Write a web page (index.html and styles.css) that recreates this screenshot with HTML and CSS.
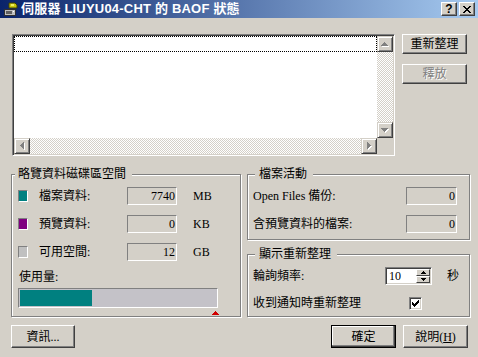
FILE: index.html
```html
<!DOCTYPE html>
<html>
<head>
<meta charset="utf-8">
<link rel="stylesheet" href="styles.css">
</head>
<body>
<div class="window">
  <div class="titlebar">
    <svg class="app-icon" width="16" height="16" viewBox="0 0 16 16">
      <path d="M7 2h6l2 2v3H7z" fill="#c8c810" stroke="#404000" stroke-width="1"/>
      <rect x="9" y="3" width="3" height="2" fill="#f0f060"/>
      <rect x="2.5" y="8.5" width="11" height="6" fill="#c0c0c0" stroke="#303030"/>
      <rect x="4" y="10" width="6" height="3" fill="#606060"/>
      <rect x="11" y="10" width="1" height="1" fill="#ffffff"/>
    </svg>
    <span class="title">伺服器 LIUYU04-CHT 的 BAOF 狀態</span>
    <div class="caption-buttons">
      <span class="cap-btn">?</span>
      <span class="cap-btn">
        <svg width="8" height="7" viewBox="0 0 8 7"><path d="M0 0h2v1H0zM6 0h2v1H6zM1 1h2v1H1zM5 1h2v1H5zM2 2h4v1H2zM3 3h2v1H3zM2 4h4v1H2zM1 5h2v1H1zM5 5h2v1H5zM0 6h2v1H0zM6 6h2v1H6z" fill="#000"/></svg>
      </span>
    </div>
  </div>

  <div class="client">
    <div class="top-row">
      <div class="listbox">
        <div class="list-body">
          <div class="list-items"><div class="list-item"></div></div>
          <div class="vscroll">
            <div class="sbtn"><svg width="8" height="5" viewBox="0 0 8 5"><path transform="translate(1 1)" d="M3 0h1v1h1v1h1v1h1v1H0V3h1V2h1V1h1z" fill="#fff"/><path d="M3 0h1v1h1v1h1v1h1v1H0V3h1V2h1V1h1z" fill="#808080"/></svg></div>
            <div class="track"></div>
            <div class="sbtn"><svg width="8" height="5" viewBox="0 0 8 5"><path transform="translate(1 1)" d="M0 0h7v1H6v1H5v1H4v1H3V3H2V2H1V1H0z" fill="#fff"/><path d="M0 0h7v1H6v1H5v1H4v1H3V3H2V2H1V1H0z" fill="#808080"/></svg></div>
          </div>
        </div>
        <div class="hscroll-row">
          <div class="hscroll">
            <div class="sbtn"><svg width="5" height="8" viewBox="0 0 5 8"><path transform="translate(1 1)" d="M3 0h1v7H3V6H2V5H1V4H0V3h1V2h1V1h1z" fill="#fff"/><path d="M3 0h1v7H3V6H2V5H1V4H0V3h1V2h1V1h1z" fill="#808080"/></svg></div>
            <div class="track"></div>
            <div class="sbtn"><svg width="5" height="8" viewBox="0 0 5 8"><path transform="translate(1 1)" d="M0 0h1v1h1v1h1v1h1v1H3v1H2v1H1v1H0z" fill="#fff"/><path d="M0 0h1v1h1v1h1v1h1v1H3v1H2v1H1v1H0z" fill="#808080"/></svg></div>
          </div>
          <div class="corner"></div>
        </div>
      </div>
      <div class="side-buttons">
        <button class="btn side-btn">重新整理</button>
        <button class="btn side-btn" disabled>釋放</button>
      </div>
    </div>

    <div class="groups">
      <fieldset class="group space">
        <legend>略覽資料磁碟區空間</legend>
        <div class="space-body">
          <div class="stat-row">
            <span class="swatch teal"></span>
            <span class="stat-label">檔案資料:</span>
            <span class="field">7740</span>
            <span class="unit">MB</span>
          </div>
          <div class="stat-row">
            <span class="swatch purple"></span>
            <span class="stat-label">預覽資料:</span>
            <span class="field">0</span>
            <span class="unit">KB</span>
          </div>
          <div class="stat-row">
            <span class="swatch gray"></span>
            <span class="stat-label">可用空間:</span>
            <span class="field">12</span>
            <span class="unit">GB</span>
          </div>
          <div class="usage-label">使用量:</div>
          <div class="meter"><div class="meter-fill" style="width:72px"></div></div>
          <svg class="marker" width="7" height="4" viewBox="0 0 7 4"><path d="M3 0h1v1h1v1h1v1h1v1H0V3h1V2h1V1h1z" fill="#d00000"/></svg>
        </div>
      </fieldset>

      <div class="right-col">
        <fieldset class="group activity">
          <legend>檔案活動</legend>
          <div class="act-body">
            <div class="act-row">
              <span>Open Files 備份:</span>
              <span class="field wide">0</span>
            </div>
            <div class="act-row">
              <span>含預覽資料的檔案:</span>
              <span class="field wide">0</span>
            </div>
          </div>
        </fieldset>
        <fieldset class="group refresh">
          <legend>顯示重新整理</legend>
          <div class="ref-body">
            <div class="ref-row">
              <span class="poll-label">輪詢頻率:</span>
              <div class="spinner">
                <span class="spin-text">10</span>
                <div class="spin-btns">
                  <div class="spin-btn"><svg width="5" height="3" viewBox="0 0 5 3"><path d="M2 0h1v1h1v1h1v1H0V2h1V1h1z" fill="#000"/></svg></div>
                  <div class="spin-btn"><svg width="5" height="3" viewBox="0 0 5 3"><path d="M0 0h5v1H4v1H3v1H2V2H1V1H0z" fill="#000"/></svg></div>
                </div>
              </div>
              <span class="sec">秒</span>
            </div>
            <div class="ref-row check-row">
              <span class="check-label">收到通知時重新整理</span>
              <span class="checkbox"><svg width="7" height="7" viewBox="0 0 7 7"><path d="M6 0h1v1H6zM5 1h2v1H5zM0 2h1v1H0zM4 2h3v1H4zM0 3h2v1H0zM3 3h3v1H3zM0 4h5v1H0zM1 5h3v1H1zM2 6h1v1H2z" fill="#000"/></svg></span>
            </div>
          </div>
        </fieldset>
      </div>
    </div>

    <div class="bottom-row">
      <button class="btn info-btn">資訊...</button>
      <button class="btn default ok-btn">確定</button>
      <button class="btn help-btn">說明(<u>H</u>)</button>
    </div>
  </div>
</div>
</body>
</html>
```

FILE: styles.css
```css
* { box-sizing: border-box; }
html, body { margin: 0; padding: 0; }
body {
  width: 478px;
  height: 357px;
  overflow: hidden;
  background: #d4d0c8;
  color: #000;
  font: 12px/14px "Liberation Serif", "Noto Sans CJK TC", serif;
}
.window { width: 478px; height: 357px; display: flex; flex-direction: column; }

/* title bar */
.titlebar {
  height: 18px;
  flex: none;
  display: flex;
  align-items: center;
  background: linear-gradient(90deg, #0a246a 0%, #a6caf0 100%);
}
.app-icon { margin-left: 2px; flex: none; }
.title {
  margin-left: 3px;
  color: #fff;
  font: bold 13px/18px "Liberation Sans", "Noto Sans CJK TC", sans-serif;
  letter-spacing: 0.2px;
  white-space: nowrap;
}
.caption-buttons { margin-left: auto; margin-right: 3px; display: flex; gap: 2px; }
.cap-btn {
  width: 16px;
  height: 14px;
  display: flex;
  align-items: center;
  justify-content: center;
  background: #d4d0c8;
  border: 1px solid;
  border-color: #fff #404040 #404040 #fff;
  box-shadow: inset -1px -1px #808080;
  font: bold 12px/12px "Liberation Sans", sans-serif;
}

/* buttons */
.btn {
  font: 12px/14px "Liberation Serif", "Noto Sans CJK TC", serif;
  color: #000;
  background: #d4d0c8;
  border: 1px solid;
  border-color: #fff #404040 #404040 #fff;
  box-shadow: inset -1px -1px #808080;
  padding: 0;
  display: flex;
  align-items: center;
  justify-content: center;
}
.btn:disabled { color: #808080; text-shadow: 1px 1px 0 #fff; }
.btn.default {
  border-color: #000;
  box-shadow: inset -1px -1px #404040, inset -2px -2px #808080, inset 1px 1px #fff;
}

/* top row */
.top-row { display: flex; gap: 7px; margin: 16px 0 0 12px; }
.listbox {
  width: 383px;
  height: 122px;
  border: 1px solid;
  border-color: #808080 #fff #fff #808080;
  box-shadow: inset 1px 1px #404040, inset -1px -1px #d4d0c8;
  padding: 1px;
  background: #fff;
  display: flex;
  flex-direction: column;
}
.list-body { display: flex; height: 102px; }
.list-items { flex: 1; }
.list-item { height: 16px; border: 1px dotted #000; }
.vscroll { width: 16px; display: flex; flex-direction: column; }
.hscroll-row { display: flex; height: 16px; }
.hscroll { flex: 1; display: flex; }
.track {
  flex: 1;
  background: repeating-conic-gradient(#fff 0 25%, #d4d0c8 0 50%) 0 0 / 2px 2px;
}
.corner { width: 16px; background: #d4d0c8; }
.sbtn {
  width: 16px;
  height: 16px;
  flex: none;
  background: #d4d0c8;
  border: 1px solid;
  border-color: #d4d0c8 #404040 #404040 #d4d0c8;
  box-shadow: inset 1px 1px #fff, inset -1px -1px #808080;
  display: flex;
  align-items: center;
  justify-content: center;
}
.side-buttons { display: flex; flex-direction: column; gap: 10px; }
.side-btn { width: 65px; height: 20px; }

/* group boxes */
.groups { display: flex; gap: 6px; margin: 11px 0 0 11px; }
.group {
  margin: 0;
  padding: 0;
  min-width: 0;
  border: 1px solid #808080;
  box-shadow: 1px 1px 0 #fff, inset 1px 1px 0 #fff;
}
.group legend {
  height: 15px;
  line-height: 15px;
  background: #d4d0c8;
  margin-left: 3px;
  padding: 0 6px 0 3px;
}
.space { width: 230px; height: 150px; }
.right-col { display: flex; flex-direction: column; gap: 7px; }
.right-col .group legend { margin-left: 7px; padding: 0 6px 0 4px; }
.activity { width: 223px; height: 73px; }
.refresh { width: 223px; height: 70px; }

.space-body { padding: 5px 0 0 6px; display: flex; flex-direction: column; }
.stat-row { display: flex; align-items: center; height: 18px; }
.stat-row + .stat-row { margin-top: 10px; }
.swatch {
  width: 10px;
  height: 12px;
  flex: none;
  border: 1px solid;
  border-color: #808080 #fff #fff #808080;
}
.teal { background: #008080; }
.purple { background: #800080; }
.gray { background: #c0c0c0; }
.stat-label { margin-left: 11px; width: 88px; }
.field {
  width: 50px;
  height: 18px;
  border: 1px solid;
  border-color: #808080 #fff #fff #808080;
  text-align: right;
  padding-right: 1px;
  line-height: 16px;
}
.field.wide { width: 51px; }
.unit { margin-left: 16px; }
.usage-label { margin: 9px 0 0 1px; }
.meter {
  margin-top: 4px;
  width: 200px;
  height: 20px;
  border: 1px solid;
  border-color: #808080 #fff #fff #808080;
  background: #c4c2c8;
  padding: 1px;
}
.meter-fill { height: 100%; background: #008080; }
.marker { margin: 3px 0 0 194px; display: block; }

.act-body { padding: 5px 12px 0 5px; }
.act-row { display: flex; align-items: center; justify-content: space-between; height: 18px; }
.act-row + .act-row { margin-top: 10px; }

.ref-body { padding: 5px 0 0 5px; }
.ref-row { display: flex; align-items: center; }
.poll-label { width: 132px; }
.spinner {
  width: 47px;
  height: 18px;
  display: flex;
  border: 1px solid;
  border-color: #808080 #fff #fff #808080;
  box-shadow: inset 1px 1px #404040, inset -1px -1px #d4d0c8;
  padding: 1px;
  background: #fff;
}
.spin-text { flex: 1; padding-left: 2px; line-height: 14px; }
.spin-btns { width: 14px; display: flex; flex-direction: column; }
.spin-btn {
  flex: 1;
  background: #d4d0c8;
  border: 1px solid;
  border-color: #fff #404040 #404040 #fff;
  display: flex;
  align-items: center;
  justify-content: center;
}
.sec { margin-left: 15px; }
.check-row { margin-top: 11px; }
.check-label { width: 156px; }
.checkbox {
  width: 13px;
  height: 13px;
  border: 1px solid;
  border-color: #808080 #fff #fff #808080;
  box-shadow: inset 1px 1px #404040, inset -1px -1px #d4d0c8;
  background: #fff;
  display: flex;
  align-items: center;
  justify-content: center;
}

/* bottom row */
.bottom-row { display: flex; gap: 7px; margin: 8px 10px 0 11px; height: 23px; }
.info-btn { width: 64px; margin-right: auto; }
.ok-btn, .help-btn { width: 65px; }
```
